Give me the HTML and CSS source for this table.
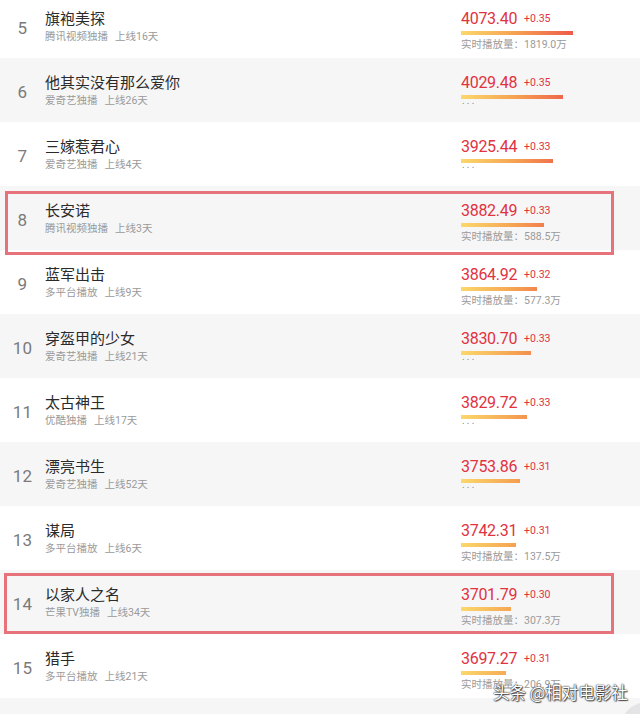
FILE: index.html
```html
<!DOCTYPE html>
<html lang="zh-CN">
<head>
<meta charset="utf-8">
<title>榜单</title>
<link rel="stylesheet" href="styles.css">
</head>
<body>
<div class="page">
  <ul class="list">
    <li class="row">
      <div class="rank">5</div>
      <div class="info"><div class="title">旗袍美探</div><div class="sub"><span>腾讯视频独播</span><span class="days">上线16天</span></div></div>
      <div class="stats"><div class="score">4073.40<span class="delta">+0.35</span></div><div class="bar" style="width:112px"></div><div class="play">实时播放量：1819.0万</div></div>
    </li>
    <li class="row alt">
      <div class="rank">6</div>
      <div class="info"><div class="title">他其实没有那么爱你</div><div class="sub"><span>爱奇艺独播</span><span class="days">上线26天</span></div></div>
      <div class="stats"><div class="score">4029.48<span class="delta">+0.35</span></div><div class="bar" style="width:102px"></div><div class="more">...</div></div>
    </li>
    <li class="row">
      <div class="rank">7</div>
      <div class="info"><div class="title">三嫁惹君心</div><div class="sub"><span>爱奇艺独播</span><span class="days">上线4天</span></div></div>
      <div class="stats"><div class="score">3925.44<span class="delta">+0.33</span></div><div class="bar" style="width:92px"></div><div class="more">...</div></div>
    </li>
    <li class="row alt hl hl-a">
      <div class="rank">8</div>
      <div class="info"><div class="title">长安诺</div><div class="sub"><span>腾讯视频独播</span><span class="days">上线3天</span></div></div>
      <div class="stats"><div class="score">3882.49<span class="delta">+0.33</span></div><div class="bar" style="width:83px"></div><div class="play">实时播放量：588.5万</div></div>
    </li>
    <li class="row">
      <div class="rank">9</div>
      <div class="info"><div class="title">蓝军出击</div><div class="sub"><span>多平台播放</span><span class="days">上线9天</span></div></div>
      <div class="stats"><div class="score">3864.92<span class="delta">+0.32</span></div><div class="bar" style="width:76px"></div><div class="play">实时播放量：577.3万</div></div>
    </li>
    <li class="row alt">
      <div class="rank">10</div>
      <div class="info"><div class="title">穿盔甲的少女</div><div class="sub"><span>爱奇艺独播</span><span class="days">上线21天</span></div></div>
      <div class="stats"><div class="score">3830.70<span class="delta">+0.33</span></div><div class="bar" style="width:70px"></div><div class="more">...</div></div>
    </li>
    <li class="row">
      <div class="rank">11</div>
      <div class="info"><div class="title">太古神王</div><div class="sub"><span>优酷独播</span><span class="days">上线17天</span></div></div>
      <div class="stats"><div class="score">3829.72<span class="delta">+0.33</span></div><div class="bar" style="width:66px"></div><div class="more">...</div></div>
    </li>
    <li class="row alt">
      <div class="rank">12</div>
      <div class="info"><div class="title">漂亮书生</div><div class="sub"><span>爱奇艺独播</span><span class="days">上线52天</span></div></div>
      <div class="stats"><div class="score">3753.86<span class="delta">+0.31</span></div><div class="bar" style="width:59px"></div><div class="more">...</div></div>
    </li>
    <li class="row">
      <div class="rank">13</div>
      <div class="info"><div class="title">谋局</div><div class="sub"><span>多平台播放</span><span class="days">上线6天</span></div></div>
      <div class="stats"><div class="score">3742.31<span class="delta">+0.31</span></div><div class="bar" style="width:55px"></div><div class="play">实时播放量：137.5万</div></div>
    </li>
    <li class="row alt hl hl-b">
      <div class="rank">14</div>
      <div class="info"><div class="title">以家人之名</div><div class="sub"><span>芒果TV独播</span><span class="days">上线34天</span></div></div>
      <div class="stats"><div class="score">3701.79<span class="delta">+0.30</span></div><div class="bar" style="width:50px"></div><div class="play">实时播放量：307.3万</div></div>
    </li>
    <li class="row">
      <div class="rank">15</div>
      <div class="info"><div class="title">猎手</div><div class="sub"><span>多平台播放</span><span class="days">上线21天</span></div></div>
      <div class="stats"><div class="score">3697.27<span class="delta">+0.31</span></div><div class="bar" style="width:45px"></div><div class="play">实时播放量：206.9万</div></div>
    </li>
    <li class="row alt"></li>
  </ul>
  <div class="watermark">头条 @相对电影社</div>
  <div class="fab"></div>
</div>
</body>
</html>
```

FILE: styles.css
```css
*, *::before, *::after { box-sizing: border-box; }
html, body {
  margin: 0;
  padding: 0;
  background: #ffffff;
}
body {
  font-family: Roboto, "Noto Sans CJK SC", sans-serif;
  width: 640px;
  height: 714px;
  overflow: hidden;
}
.page {
  position: relative;
  width: 640px;
  height: 714px;
  overflow: hidden;
}
.list {
  list-style: none;
  margin: -6px 0 0 0;
  padding: 0;
}
.row {
  position: relative;
  display: flex;
  align-items: flex-start;
  height: 64px;
  background: #ffffff;
}
.row.alt { background: #f6f6f7; }
.rank {
  width: 45px;
  flex: none;
  text-align: center;
  font-size: 17px;
  line-height: 64px;
  padding-top: 2px;
  color: #7a7a7a;
  letter-spacing: 0.3px;
}
.info {
  flex: 1;
  padding-top: 16px;
}
.title {
  font-size: 15px;
  line-height: 18px;
  color: #2b2b2b;
}
.sub {
  margin-top: 2px;
  font-size: 10.5px;
  line-height: 14px;
  color: #9a9a9a;
}
.days { margin-left: 7px; }
.stats {
  width: 179px;
  flex: none;
  padding-top: 16px;
}
.score {
  font-size: 16px;
  line-height: 18px;
  color: #e0333f;
  letter-spacing: -0.3px;
  white-space: nowrap;
}
.delta {
  font-size: 10.5px;
  margin-left: 7px;
  vertical-align: 2px;
  letter-spacing: 0;
  color: #e0333f;
}
.bar {
  margin-top: 3px;
  height: 4px;
  background-image: linear-gradient(90deg, #fbd86c 0%, #f6a653 45%, #ef5a4a 100%);
  background-size: 112px 100%;
  background-repeat: no-repeat;
}
.play {
  margin-top: 3px;
  font-size: 10.5px;
  line-height: 14px;
  color: #9a9a9a;
  white-space: nowrap;
}
.more {
  font-size: 10px;
  line-height: 4px;
  height: 6px;
  letter-spacing: 2.2px;
  color: #8a8a8a;
  margin-left: 1px;
}
.hl::after {
  content: "";
  position: absolute;
  z-index: 2;
  left: 5px;
  width: 609px;
  border: 3px solid #e6727c;
  pointer-events: none;
}
.hl-a::after { top: 5px; height: 64px; }
.hl-b::after { top: 3px; height: 61px; left: 4px; width: 610px; }
.watermark {
  position: absolute;
  z-index: 3;
  left: 493px;
  top: 681px;
  font-family: "Noto Sans CJK SC", sans-serif;
  font-size: 16.5px;
  line-height: 22px;
  color: #ffffff;
  white-space: nowrap;
  text-shadow: 0 0 1px rgba(0,0,0,0.9), 0 0 2px rgba(0,0,0,0.7), 1px 1px 1px rgba(0,0,0,0.6);
}
.fab {
  position: absolute;
  z-index: 3;
  left: 622px;
  top: 703px;
  width: 44px;
  height: 44px;
  border-radius: 50%;
  background: #e4e4e6;
}
```
